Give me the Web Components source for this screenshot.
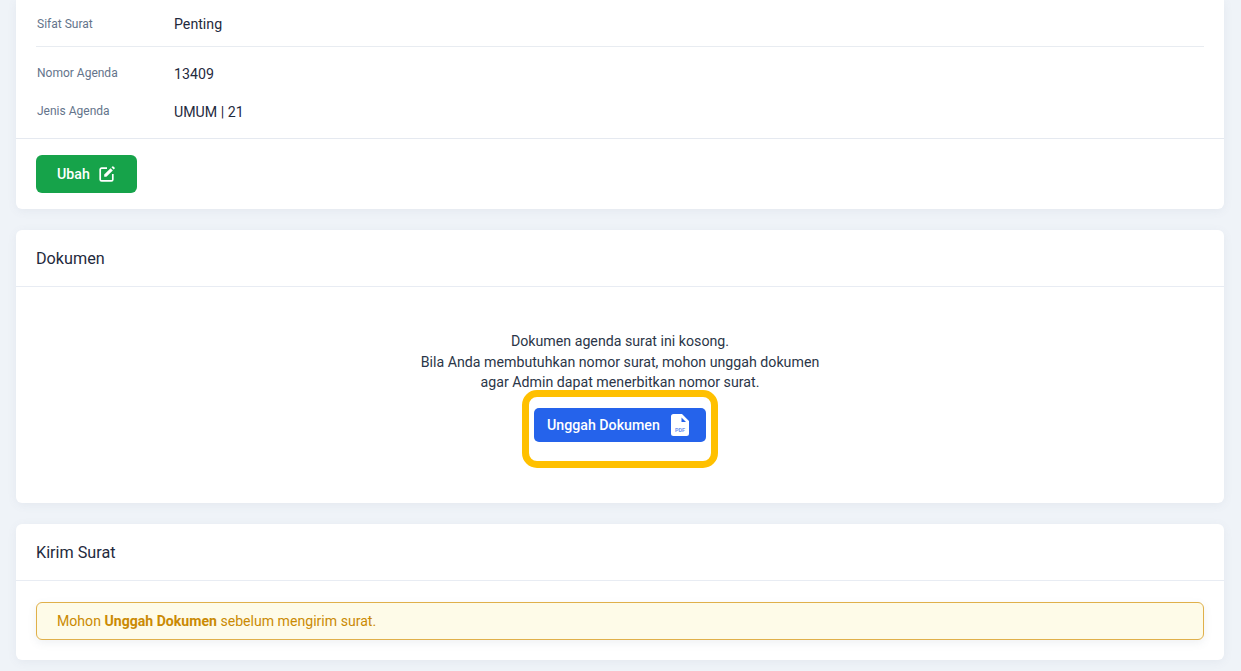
<!DOCTYPE html>
<html>
<head>
<meta charset="utf-8">
<style>
html, body { margin: 0; height: 671px; overflow: hidden; }
body { background: #eff3f8; font-family: Roboto, "Liberation Sans", sans-serif; color: #1f2a3d; }
#page { display: flex; flex-direction: column; gap: 21px; padding: 0 17px 0 16px; }
</style>
</head>
<body>
<div id="page">
  <info-card>
    <info-row label="Sifat Surat" value="Penting" style="height:45px;--label-shift:0px"></info-row>
    <info-divider></info-divider>
    <info-row label="Nomor Agenda" value="13409" style="height:38px"></info-row>
    <info-row label="Jenis Agenda" value="UMUM | 21" style="height:38px"></info-row>
    <div slot="footer"><edit-button>Ubah</edit-button></div>
  </info-card>
  <section-card title="Dokumen" style="height:273px">
    <empty-document></empty-document>
  </section-card>
  <section-card title="Kirim Surat" style="height:136px">
    <warning-box>Mohon <b>Unggah Dokumen</b> sebelum mengirim surat.</warning-box>
  </section-card>
</div>

<script>
class InfoCard extends HTMLElement{
    constructor(){
        super();
        this.attachShadow({mode: 'open'})
    }
    connectedCallback(){
        this.shadowRoot.innerHTML = `
        <style>
        :host{ display: block; background: #fff; border-radius: 0 0 6px 6px; box-shadow: 0 2px 10px rgba(100,116,139,.08); height: 209px; }
        .body{ padding: 1px 20px 0; height: 138px; box-sizing: border-box; }
        .footer{ border-top: 1px solid #e5e9f0; padding: 16px 20px; }
        </style>
        <div class="body"><slot></slot></div>
        <div class="footer"><slot name="footer"></slot></div>
        `
    }
}
customElements.define('info-card', InfoCard)

class InfoRow extends HTMLElement{
    constructor(){
        super();
        this.attachShadow({mode: 'open'})
    }
    connectedCallback(){
        this.shadowRoot.innerHTML = `
        <style>
        :host{ display: flex; align-items: center; }
        .label{ width: 138px; padding-left: 1px; box-sizing: border-box; font-size: 12px; color: #64748b; margin-top: var(--label-shift, -2px); }
        .value{ font-size: 14.2px; color: #1f2a3d; }
        </style>
        <span class="label">${this.getAttribute('label')}</span>
        <span class="value">${this.getAttribute('value')}</span>
        `
    }
}
customElements.define('info-row', InfoRow)

class InfoDivider extends HTMLElement{
    constructor(){
        super();
        this.attachShadow({mode: 'open'}).innerHTML = `
        <style>:host{ display: block; height: 1px; background: #e8ecf1; margin-bottom: 8px; }</style>
        `
    }
}
customElements.define('info-divider', InfoDivider)

class EditButton extends HTMLElement{
    constructor(){
        super();
        this.attachShadow({mode: 'open'}).innerHTML = `
        <style>
        :host{ display: inline-flex; align-items: center; gap: 9px; height: 38px; width: 101px; box-sizing: border-box; padding-left: 21px; background: #16a34a; color: #fff; border-radius: 6px; font-size: 14.2px; font-weight: 500; }
        svg{ display: block; }
        </style>
        <slot></slot>
        <svg width="16" height="16" viewBox="0 0 16 16" fill="none">
          <path d="M8 2.2H2.6A1.4 1.4 0 0 0 1.2 3.6v9.8a1.4 1.4 0 0 0 1.4 1.4h9.8a1.4 1.4 0 0 0 1.4-1.400V8" stroke="#fff" stroke-width="1.7"/>
          <path d="M5.2 8.6 11.6 2.2l2.2 2.2-6.4 6.4H5.2z" fill="#fff"/>
          <path d="M12.5 1.3 13.3.5a.8.8 0 0 1 1.100 0l1.100 1.100a.8.8 0 0 1 0 1.100l-.8.8z" fill="#fff"/>
        </svg>
        `
    }
}
customElements.define('edit-button', EditButton)

class SectionCard extends HTMLElement{
    constructor(){
        super();
        this.attachShadow({mode: 'open'})
    }
    connectedCallback(){
        this.shadowRoot.innerHTML = `
        <style>
        :host{ display: flex; flex-direction: column; background: #fff; border-radius: 6px; box-shadow: 0 2px 10px rgba(100,116,139,.08); }
        .head{ height: 57px; box-sizing: border-box; border-bottom: 1px solid #e8ecf3; padding: 0 20px; display: flex; align-items: center; font-size: 16.2px; color: #1f2a3d; flex: none; }
        .content{ flex: 1; padding: 21px 20px 0; }
        </style>
        <div class="head">${this.getAttribute('title')}</div>
        <div class="content"><slot></slot></div>
        `
    }
}
customElements.define('section-card', SectionCard)

class EmptyDocument extends HTMLElement{
    constructor(){
        super();
        this.attachShadow({mode: 'open'}).innerHTML = `
        <style>
        :host{ display: flex; flex-direction: column; align-items: center; padding-top: 23px; font-size: 14.2px; line-height: 20.5px; color: #2b3648; text-align: center; }
        .btn-wrap{ position: relative; margin-top: 15px; }
        .btn{ display: flex; align-items: center; justify-content: space-between; width: 172px; height: 34px; box-sizing: border-box; padding: 0 17px 0 13px; background: #2563eb; color: #fff; border-radius: 5px; font-weight: 500; font-size: 14.2px; }
        .label{ position: relative; top: 1px; }
        .ring{ position: absolute; left: -12px; top: -18px; width: 196px; height: 78px; box-sizing: border-box; border: 7px solid #ffc000; border-radius: 15px; }
        svg{ display: block; }
        </style>
        <div>Dokumen agenda surat ini kosong.<br>Bila Anda membutuhkan nomor surat, mohon unggah dokumen<br>agar Admin dapat menerbitkan nomor surat.</div>
        <div class="btn-wrap">
          <div class="btn"><span class="label">Unggah Dokumen</span>
            <svg width="18" height="22" viewBox="0 0 18 22">
              <path d="M2.5 0H11l7 7v12.5a2.5 2.5 0 0 1-2.5 2.5h-13A2.5 2.5 0 0 1 0 19.500v-17A2.500 2.500 0 0 1 2.500 0z" fill="#fff"/>
              <path d="M10.500 3.500 15 8h-4.500z" fill="#2563eb"/>
              <text x="9" y="18" text-anchor="middle" font-family="Roboto, sans-serif" font-size="5.500" font-weight="700" fill="#6f93ee">PDF</text>
            </svg>
          </div>
          <div class="ring"></div>
        </div>
        `
    }
}
customElements.define('empty-document', EmptyDocument)

class WarningBox extends HTMLElement{
    constructor(){
        super();
        this.attachShadow({mode: 'open'}).innerHTML = `
        <style>
        :host{ display: flex; align-items: center; height: 38px; box-sizing: border-box; padding: 0 20px; background: #fefbe8; border: 1px solid #e0b04a; border-radius: 6px; color: #ca8a04; font-size: 14.1px; box-shadow: 0 3px 8px rgba(100,116,139,.1); }
        span{ white-space: pre-wrap; }
        ::slotted(b){ font-weight: 700; }
        </style>
        <span><slot></slot></span>
        `
    }
}
customElements.define('warning-box', WarningBox)
</script>
</body>
</html>
